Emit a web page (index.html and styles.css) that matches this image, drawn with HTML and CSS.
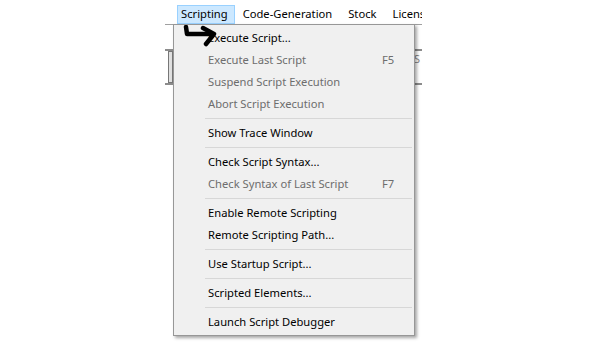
FILE: index.html
```html
<!DOCTYPE html>
<html lang="en">
<head>
    <meta charset="UTF-8">
    <title>Scripting menu</title>
    <link rel="stylesheet" href="styles.css">
</head>
<body>
    <div class="window">
        <div class="menubar">
            <span class="menubar-item active">Scripting</span>
            <span class="menubar-item">Code-Generation</span>
            <span class="menubar-item">Stock</span>
            <span class="menubar-item">Licensing</span>
        </div>

        <div class="toolbar">
            <div class="toolbar-row"></div>
            <div class="toolbar-row tall">
                <div class="field"></div>
                <span class="tool-label">S</span>
            </div>
        </div>

        <div class="dropdown">
            <div class="item"><span class="label">Execute Script...</span><span class="key"></span></div>
            <div class="item disabled"><span class="label">Execute Last Script</span><span class="key">F5</span></div>
            <div class="item disabled"><span class="label">Suspend Script Execution</span><span class="key"></span></div>
            <div class="item disabled"><span class="label">Abort Script Execution</span><span class="key"></span></div>
            <div class="separator"></div>
            <div class="item"><span class="label">Show Trace Window</span><span class="key"></span></div>
            <div class="separator"></div>
            <div class="item"><span class="label">Check Script Syntax...</span><span class="key"></span></div>
            <div class="item disabled"><span class="label">Check Syntax of Last Script</span><span class="key">F7</span></div>
            <div class="separator"></div>
            <div class="item"><span class="label">Enable Remote Scripting</span><span class="key"></span></div>
            <div class="item"><span class="label">Remote Scripting Path...</span><span class="key"></span></div>
            <div class="separator"></div>
            <div class="item"><span class="label">Use Startup Script...</span><span class="key"></span></div>
            <div class="separator"></div>
            <div class="item"><span class="label">Scripted Elements...</span><span class="key"></span></div>
            <div class="separator"></div>
            <div class="item"><span class="label">Launch Script Debugger</span><span class="key"></span></div>
        </div>

        <svg class="pointer" width="40" height="24" viewBox="0 0 40 24">
            <path d="M4 2 L5 9 L28 9" fill="none" stroke="#000" stroke-width="4.5" stroke-linejoin="round" stroke-linecap="round"/>
            <path d="M21 3 L32 9 L24 19" fill="none" stroke="#000" stroke-width="4.5" stroke-linejoin="round" stroke-linecap="round"/>
        </svg>
    </div>
</body>
</html>
```

FILE: styles.css
```css
body {
    margin: 0;
    padding: 0;
    background: #ffffff;
    font-family: 'Noto Sans', 'DejaVu Sans', sans-serif;
    font-size: 11.2px;
    color: #000000;
}

.window {
    position: relative;
    margin-left: 165px;
    width: 257px;
    height: 343px;
    overflow: hidden;
}

.menubar {
    display: flex;
    height: 24px;
    align-items: flex-end;
    padding-left: 12px;
    background: #ffffff;
    white-space: nowrap;
}

.menubar-item {
    padding: 0 7px 1px;
    line-height: 16px;
    border: 1px solid transparent;
}

.menubar-item.active {
    background: #cce8ff;
    border-color: #99d1ff;
    padding: 0 6px 1px 3px;
}

.toolbar {
    border-top: 1px solid #a0a0a0;
    background: #ffffff;
}

.toolbar-row {
    height: 24px;
    border-bottom: 2px solid #8c8c8c;
}

.toolbar-row.tall {
    height: 32px;
    display: flex;
    justify-content: space-between;
    padding: 0 2px 0 3px;
}

.field {
    width: 3px;
    height: 30px;
    border: 1px solid #777777;
    background: #e0e0e0;
}

.tool-label {
    color: #888888;
    font-size: 11px;
    line-height: 16px;
}

.dropdown {
    position: absolute;
    left: 8px;
    top: 24px;
    width: 236px;
    padding: 2px;
    background: #f0f0f0;
    border: 1px solid #979797;
    box-shadow: 2px 2px 3px rgba(0, 0, 0, 0.35);
}

.item {
    display: flex;
    height: 22px;
    align-items: center;
    padding-left: 32px;
    padding-bottom: 2px;
    box-sizing: border-box;
    white-space: nowrap;
}

.item .label {
    flex: 1;
}

.item .key {
    width: 30px;
}

.item.disabled {
    color: #6d6d6d;
}

.separator {
    height: 1px;
    margin: 3px 0 3px 29px;
    background: #d7d7d7;
}

.pointer {
    position: absolute;
    left: 17px;
    top: 25px;
}
```
